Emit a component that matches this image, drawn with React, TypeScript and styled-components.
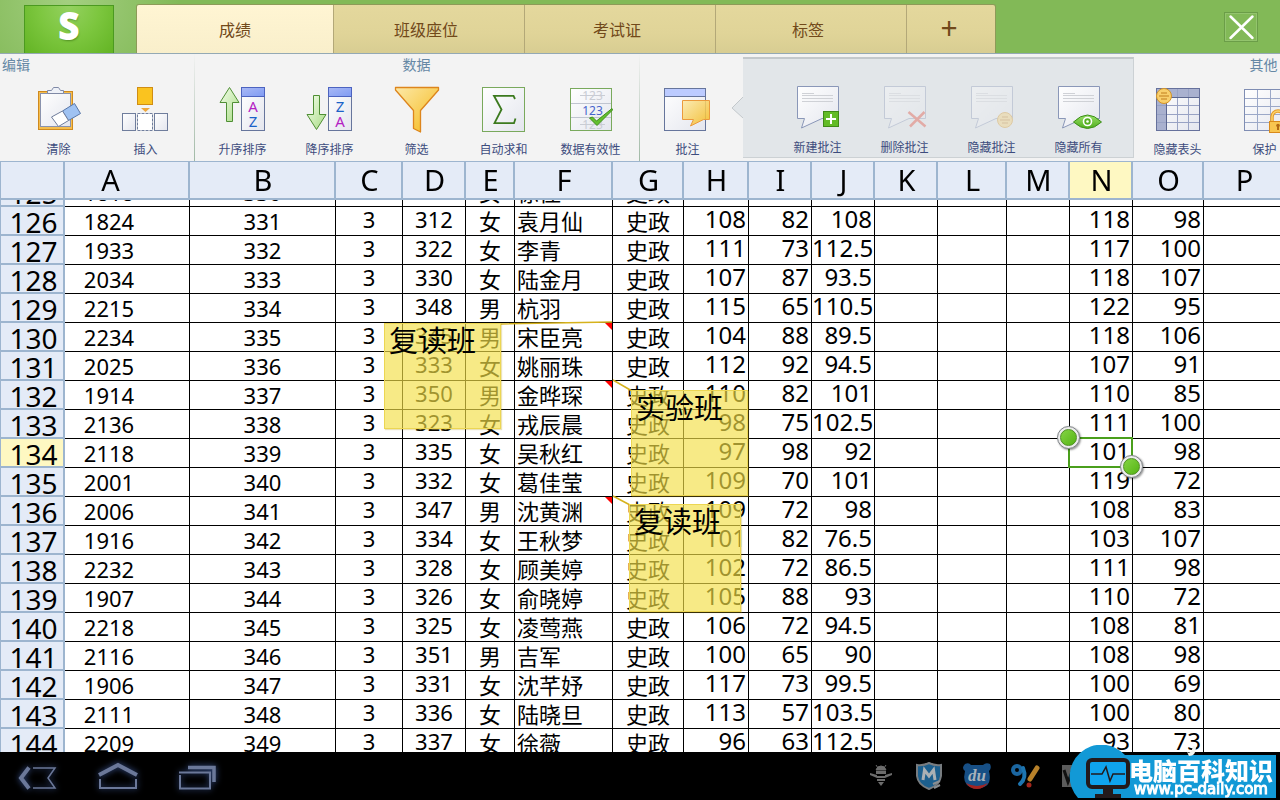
import React, { useLayoutEffect, useRef } from "react";
import styled, { createGlobalStyle, css } from "styled-components";

const SANS = `"Noto Sans", "Noto Sans CJK SC", sans-serif`;

const GlobalStyle = createGlobalStyle`
  *, *::before, *::after { box-sizing: border-box; }
  html, body, #root { height: 100%; }
  body { margin: 0; overflow: hidden; background: #000; font-family: ${SANS}; }
  button { font-family: inherit; padding: 0; border: 0; background: none; cursor: pointer; }
`;

/* ---------- shell ---------- */

const Screen = styled.div`
  display: flex;
  flex-direction: column;
  height: 100vh;
  overflow: hidden;
  background: #fff;
`;

const TopBar = styled.header`
  display: flex;
  align-items: flex-end;
  flex: none;
  height: 54px;
  padding: 0 22px 0 24px;
  border-bottom: 1px solid #94a9b4;
  background: radial-gradient(circle at 69px 0, #a3cf80 0, #82b957 110px);
`;

const Logo = styled.button`
  width: 90px;
  height: 48px;
  margin-right: 22px;
  border: 1px solid #4b9a20;
  border-bottom: 0;
  background: radial-gradient(ellipse at 50% 0, #94d160 0, #7cc63e 50%, #63b424 100%);
  color: #fff;
  font-size: 36px;
  font-weight: 700;
  line-height: 40px;
  padding-bottom: 8px;
  -webkit-text-stroke: 2px #fff;
  text-shadow: 1px 2px 2px rgba(40, 90, 10, 0.5);
`;

const Tabs = styled.nav`
  display: flex;
  height: 49px;
  border: 1px solid #8d9a58;
  border-bottom: 0;
  border-radius: 3px 3px 0 0;
  overflow: hidden;
`;

const Tab = styled.button<{ $active?: boolean; $narrow?: boolean }>`
  width: ${(p) => (p.$narrow ? 88 : p.$active ? 197 : 191)}px;
  border-right: 1px solid #b3a878;
  background: ${(p) =>
    p.$active
      ? "linear-gradient(#fff5d3, #f9efcb)"
      : "linear-gradient(#e4d89d, #e0d498 60%, #d8cd92)"};
  color: #71491a;
  font-size: ${(p) => (p.$narrow ? 30 : 16)}px;
  line-height: 24px;
  padding: ${(p) => (p.$narrow ? "0 4px 2px 0" : p.$active ? "2px 0 0" : "2px 6px 0 0")};
  &:last-child { border-right: 0; }
`;

const CloseButton = styled.button`
  width: 34px;
  height: 30px;
  margin: 0 0 11px auto;
  border: 1px solid #6b9d48;
  box-shadow: inset 0 0 0 1px #93c46d;
`;

/* ---------- ribbon ---------- */

const Ribbon = styled.div`
  display: flex;
  flex: none;
  height: 107px;
  overflow: hidden;
  background: #f3f3f3;
`;

const Group = styled.section<{ $pad: string; $divided?: boolean; $width?: number }>`
  position: relative;
  display: flex;
  flex-direction: column;
  flex: none;
  padding: ${(p) => p.$pad};
  ${(p) => p.$width && css`width: ${p.$width}px;`}
  ${(p) =>
    p.$divided &&
    css`
      border-right: 1px solid;
      border-image: linear-gradient(#f3f3f3, #9fb8a4) 1;
    `}
`;

const GroupTitle = styled.h2<{ $left?: boolean }>`
  height: 24px;
  margin: 0 ${(p) => (p.$left ? "0 0 -13px" : "0")};
  color: #6688a5;
  font-size: 14px;
  font-weight: 400;
  line-height: 22px;
  text-align: ${(p) => (p.$left ? "left" : "center")};
`;

const Tools = styled.div`
  display: flex;
  padding-top: 8px;
`;

const ToolButton = styled.button`
  display: flex;
  flex-direction: column;
  align-items: center;
  width: 87px;
  color: #3d4c7d;
  font-size: 12px;
  line-height: 20px;
  white-space: nowrap;
  svg { display: block; margin-bottom: 6px; }
`;

const CommentPanel = styled.section`
  position: relative;
  display: flex;
  flex: none;
  align-items: flex-start;
  height: 101px;
  margin-top: 3px;
  padding: 25px 11px 0 31px;
  border: 1px solid #ccd1d4;
  border-top: 2px solid #c3c8cb;
  border-left-width: 0;
  background: #e2e6e9;
`;

const Pointer = styled.svg`
  position: absolute;
  right: 100%;
  top: 38px;
`;

/* ---------- sheet ---------- */

const SheetView = styled.main`
  flex: 1;
  min-height: 0;
  overflow: hidden;
  background: #fff;
`;

const SheetCanvas = styled.div`
  position: relative;
  width: 100%;
  min-width: 1285px;
`;

const SheetTable = styled.table`
  width: 100%;
  table-layout: fixed;
  border-collapse: separate;
  border-spacing: 0;
  color: #000;
`;

const HeadCell = styled.th<{ $on?: boolean; $kind?: Kind }>`
  position: sticky;
  top: 0;
  z-index: 3;
  height: 39px;
  padding: 0 ${(p) => (p.$kind === "code" ? 34 : 0)}px 0 2px;
  border: solid #9db5cf;
  border-width: 1px 2px 2px 0;
  background: ${(p) => (p.$on ? "#fef8c2" : "#e4ebf7")};
  font-size: 29px;
  font-weight: 400;
  line-height: 36px;
  text-align: center;
  &:first-child { border-left-width: 1px; }
`;

const RowHead = styled.th<{ $on?: boolean }>`
  height: 29px;
  padding: 0;
  border: solid #9db5cf;
  border-width: 0 2px 2px 1px;
  background: ${(p) => (p.$on ? "#fef8c2" : "#e4ebf7")};
  font-size: 28px;
  font-weight: 400;
  text-align: center;
  padding-left: 3px;
  div { height: 27px; line-height: 30px; }
`;

type Kind = "code" | "id" | "mid" | "text" | "name" | "num";

const kinds: Record<Kind, ReturnType<typeof css>> = {
  code: css`font-size: 22px; line-height: 28px; text-align: center; padding-right: 36px;`,
  id: css`font-size: 22px; line-height: 28px; text-align: center;`,
  mid: css`font-size: 22px; line-height: 25px; text-align: center;`,
  text: css`font-size: 22px; line-height: 28px; text-align: center;`,
  name: css`font-size: 22px; line-height: 28px; text-align: left; padding-left: 2px;`,
  num: css`font-size: 24px; line-height: 24px; text-align: right; padding-right: 2px;`,
};

const Cell = styled.td<{ $kind: Kind; $flag?: boolean }>`
  position: relative;
  height: 29px;
  padding: 0;
  border: solid #000;
  border-width: 0 1px 1px 0;
  vertical-align: top;
  white-space: nowrap;
  ${(p) => kinds[p.$kind]}
  div { height: 28px; }
  ${(p) =>
    p.$flag &&
    css`
      &::after {
        content: "";
        position: absolute;
        top: 0;
        right: 0;
        border-top: 7px solid #f00;
        border-left: 7px solid transparent;
      }
    `}
`;

const Note = styled.aside<{ $x: number; $y: number; $w: number; $h: number }>`
  position: absolute;
  z-index: 1;
  left: ${(p) => p.$x}px;
  top: ${(p) => p.$y}px;
  width: ${(p) => p.$w}px;
  height: ${(p) => p.$h}px;
  padding-left: 4px;
  border: 1px solid #ecd653;
  background: rgba(243, 223, 72, 0.66);
  box-shadow: 1px 1px 1px rgba(190, 160, 20, 0.3);
  font-size: 29px;
  line-height: 34px;
  white-space: nowrap;
`;

const Leaders = styled.svg`
  position: absolute;
  z-index: 1;
  left: 0;
  top: 0;
  pointer-events: none;
`;

const Selection = styled.div`
  position: absolute;
  z-index: 1;
  left: 1068px;
  top: 298px;
  width: 65px;
  height: 31px;
  border: 2px solid #4a9f1c;
`;

const Handle = styled.button<{ $end?: boolean }>`
  position: absolute;
  display: flex;
  align-items: center;
  justify-content: center;
  left: ${(p) => (p.$end ? 50 : -13)}px;
  top: ${(p) => (p.$end ? 16 : -13)}px;
  width: 23px;
  height: 23px;
  border: 1px solid #7f8488;
  border-radius: 50%;
  background: #ececec;
  box-shadow: 1px 1px 2px rgba(0, 0, 0, 0.4);
  &::after {
    content: "";
    width: 17px;
    height: 17px;
    border: 1px solid #4f8f24;
    border-radius: 50%;
    background: linear-gradient(135deg, #84d444, #55b414);
  }
`;

/* ---------- system bar ---------- */

const SystemBar = styled.footer`
  display: flex;
  align-items: center;
  flex: none;
  height: 48px;
  padding: 0 191px 0 13px;
  background: #000;
`;

const NavButton = styled.button`
  width: 48px;
  height: 44px;
  margin-right: 32px;
  svg { display: block; filter: drop-shadow(0 0 3px #3a5490); }
`;

const Tray = styled.div`
  display: flex;
  gap: 16px;
  margin-left: auto;
`;

const Watermark = styled.a`
  position: absolute;
  z-index: 5;
  right: 2px;
  bottom: 2px;
  width: 210px;
  height: 53px;
  color: #fff;
  text-decoration: none;
`;

const WatermarkArt = styled.svg`
  position: absolute;
  left: 0;
  top: 0;
`;

const WatermarkText = styled.div`
  position: relative;
  display: flex;
  flex-direction: column;
  align-items: center;
  padding: 13px 4px 0 60px;
  text-align: center;
  white-space: nowrap;
  strong { font: 900 24px/24px "Noto Sans CJK SC", sans-serif; }
  span { font: 400 15px/14px "DejaVu Sans", sans-serif; -webkit-text-stroke: 1px #fff; }
`;

/* ---------- icons ---------- */

const Svg = ({ children, dim }: { children: React.ReactNode; dim?: boolean }) => (
  <svg width="48" height="48" viewBox="0 0 48 48" fill="none" opacity={dim ? 0.35 : 1} aria-hidden="true">
    {children}
  </svg>
);

const DefsSvg = styled.svg`
  position: absolute;
`;

const Defs = () => (
  <DefsSvg width="0" height="0" aria-hidden="true">
    <defs>
      <linearGradient id="paper" x1="0" y1="0" x2="1" y2="1">
        <stop offset="0" stopColor="#fff" />
        <stop offset="1" stopColor="#e4e6ee" />
      </linearGradient>
      <linearGradient id="gold" x1="0" y1="0" x2="1" y2="1">
        <stop offset="0" stopColor="#fce9a8" />
        <stop offset="1" stopColor="#f5b817" />
      </linearGradient>
      <linearGradient id="leaf" x1="0" y1="0" x2="1" y2="1">
        <stop offset="0" stopColor="#f4fdec" />
        <stop offset="1" stopColor="#a8dc84" />
      </linearGradient>
      <linearGradient id="sky" x1="0" y1="0" x2="1" y2="1">
        <stop offset="0" stopColor="#a9b9f5" />
        <stop offset="1" stopColor="#7f9bf3" />
      </linearGradient>
      <linearGradient id="green" x1="0" y1="0" x2="0" y2="1">
        <stop offset="0" stopColor="#9ae06a" />
        <stop offset="1" stopColor="#4fae1c" />
      </linearGradient>
    </defs>
  </DefsSvg>
);

const ClearIcon = () => (
  <Svg>
    <rect x="3.5" y="5.5" width="34" height="38" fill="#f5bd4d" stroke="#cf8a1e" />
    <rect x="5.5" y="7.5" width="30" height="33" fill="url(#paper)" stroke="#8a93ae" />
    <path d="M12.500 7.500V4.500H16.500L18.500 1.500H23.500L25.500 4.500H28.500V7.500Z" fill="#eef1f8" stroke="#7f89a6" />
    <path d="M27.500 25L39.500 17.500L45.500 27.500L33.500 34.500Z" fill="#9fc2f2" stroke="#5876a8" />
    <path d="M16.500 31L27.500 25L33.500 34.500L23.500 40.500Z" fill="#fff" stroke="#6f7d9c" />
  </Svg>
);

const InsertIcon = () => (
  <Svg>
    <rect x="15.500" y="1.500" width="15" height="17" fill="#fac31f" stroke="#d08d13" />
    <path d="M19 22H28L23.500 26Z" fill="#eda63c" />
    <rect x=".5" y="27.500" width="13" height="17" fill="url(#paper)" stroke="#6f7d9c" />
    <rect x="15.500" y="27.500" width="15" height="17" fill="#fff" stroke="#6f7d9c" strokeDasharray="3 1" />
    <rect x="32.500" y="27.500" width="13" height="17" fill="url(#paper)" stroke="#6f7d9c" />
  </Svg>
);

const SortIcon = ({ desc }: { desc?: boolean }) => (
  <Svg>
    {desc ? (
      <path d="M7.500 9.500H13.500V28.500H20L10.500 43.500L1 28.500H7.500Z" fill="url(#leaf)" stroke="#4f8f34" />
    ) : (
      <path d="M7.500 35.500H13.500V16.500H20L10.500 1.500L1 16.500H7.500Z" fill="url(#leaf)" stroke="#4f8f34" />
    )}
    <rect x="22.500" y="1.500" width="23" height="43" fill="url(#paper)" stroke="#66759c" />
    <rect x="22.500" y="1.500" width="23" height="9" fill="url(#sky)" stroke="#4c63c0" />
    <text x="34" y="26" fontSize="15" textAnchor="middle" fill={desc ? "#1a62c8" : "#b41fc4"}>{desc ? "Z" : "A"}</text>
    <text x="34" y="41" fontSize="15" textAnchor="middle" fill={desc ? "#b41fc4" : "#1a62c8"}>{desc ? "A" : "Z"}</text>
  </Svg>
);

const FilterIcon = () => (
  <Svg>
    <path d="M2.500 1.500H45.500V4L27.500 24.500V46L20.500 42.500V24.500L2.500 4Z" fill="url(#gold)" stroke="#dd851c" strokeWidth="1.300" strokeLinejoin="round" />
  </Svg>
);

const SumIcon = () => (
  <Svg>
    <rect x="2.500" y="1.500" width="42" height="44" fill="url(#paper)" stroke="#79a95c" />
    <path d="M35 13L33.500 9.800H14L21.500 23.500L14.500 37.200H34L35.500 32.500" stroke="#3c7a1f" strokeWidth="1.800" />
  </Svg>
);

const ValidIcon = () => (
  <Svg>
    <rect x="3.500" y="2.500" width="41" height="42" fill="url(#paper)" stroke="#79a95c" />
    <path d="M4 17.500H44M4 31.500H44" stroke="#c0c5d0" />
    <text x="25.500" y="14" fontSize="12" textAnchor="middle" fill="#c9ccd4">123</text>
    <text x="25.500" y="29" fontSize="12" textAnchor="middle" fill="#4663cc">123</text>
    <text x="25.500" y="43" fontSize="12" textAnchor="middle" fill="#c9ccd4">123</text>
    <path d="M13 9.500H38M13 38.500H38" stroke="#c9ccd4" />
    <path d="M22.500 32L25.500 31L29.500 35L45 22.500L45.500 24L30 39.500Z" fill="#63c02e" stroke="#3f8f1c" />
  </Svg>
);

const CommentIcon = () => (
  <Svg>
    <rect x=".5" y="2.500" width="41" height="42" fill="url(#paper)" stroke="#66759c" />
    <rect x=".5" y="2.500" width="41" height="8" fill="#bccbff" stroke="#66759c" />
    <path d="M18.500 14.500H45.500V33.500H39.500L26.500 40L29.500 33.500H18.500Z" fill="url(#gold)" fillOpacity=".85" stroke="#eb9a3c" />
  </Svg>
);

const Bubble = () => (
  <>
    <path d="M3.500 2.500H44.500V34.500H28L7.500 44L10.500 34.500H3.500Z" fill="url(#paper)" stroke="#8a97b8" />
    <path d="M8 9.500H20M8 11.500H39M8 14.500H39M8 17.500H39" stroke="#cfd1d6" />
  </>
);

const Coin = ({ x, y }: { x: number; y: number }) => (
  <g transform={`translate(${x} ${y})`}>
    <circle r="7.500" fill="#f8cf6c" stroke="#d49425" />
    <path d="M-3 -3H3M-5 0H5M-3 3H3" stroke="#c17f1f" />
  </g>
);

const NewCommentIcon = () => (
  <Svg>
    <Bubble />
    <rect x="29.500" y="27.500" width="15" height="15" fill="#62bb26" stroke="#3f8a17" />
    <path d="M37 30V40M32 35H42" stroke="#fff" strokeWidth="2" />
  </Svg>
);

const DeleteCommentIcon = () => (
  <Svg dim>
    <Bubble />
    <path d="M27.500 28L44.500 42.500M43.500 28L29 42.500" stroke="#e2402c" strokeWidth="2.500" />
  </Svg>
);

const HideCommentIcon = () => (
  <Svg dim>
    <Bubble />
    <Coin x={37} y={36} />
  </Svg>
);

const HideAllIcon = () => (
  <Svg>
    <Bubble />
    <path d="M18.500 38Q32.500 24 46.500 38Q32.500 51 18.500 38Z" fill="url(#green)" stroke="#3f8f1c" />
    <circle cx="32.500" cy="37.500" r="4" fill="#55b021" stroke="#fff" strokeWidth="1.600" />
    <circle cx="32.500" cy="37.500" r="1.300" fill="#fff" />
  </Svg>
);

const HideHeaderIcon = () => (
  <Svg>
    <rect x="2.500" y="2.500" width="43" height="42" fill="url(#paper)" />
    <path d="M3 3H45V11.500H12.500V44H3Z" fill="#a9b1cf" />
    <path d="M23.500 3V44M34.500 3V44M3 19.500H45M3 28.500H45M3 36.500H45" stroke="#98a2c4" />
    <path d="M12.500 44V11.500H45" stroke="#5b668f" />
    <rect x="2.500" y="2.500" width="43" height="42" stroke="#66719c" />
    <Coin x={10} y={10} />
  </Svg>
);

const ProtectIcon = () => (
  <Svg>
    <rect x="3.500" y="3.500" width="44" height="41" fill="url(#paper)" stroke="#7f8db3" />
    <path d="M16.500 4V44M29.500 4V44M4 12.500H48M4 20.500H48M4 28.500H48M4 36.500H48" stroke="#9ba8c8" />
    <path d="M31 35V31A6 6 0 0 1 43 31V35" stroke="#e59a27" strokeWidth="3.500" />
    <path d="M31 35V31A6 6 0 0 1 43 31V35" stroke="#fbd36b" strokeWidth="1.500" />
    <rect x="28.500" y="35.500" width="19" height="11" fill="#f8c550" stroke="#d98a1b" />
    <circle cx="37" cy="39.500" r="1.800" fill="#b26a14" />
    <path d="M37 39V44" stroke="#b26a14" strokeWidth="2" />
  </Svg>
);

/* ---------- data ---------- */

interface Column { id: string; width?: number; kind: Kind }

const columns: Column[] = [
  { id: "A", width: 125, kind: "code" },
  { id: "B", width: 146, kind: "id" },
  { id: "C", width: 67, kind: "mid" },
  { id: "D", width: 63, kind: "mid" },
  { id: "E", width: 49, kind: "text" },
  { id: "F", width: 98, kind: "name" },
  { id: "G", width: 71, kind: "text" },
  { id: "H", width: 65, kind: "num" },
  { id: "I", width: 63, kind: "num" },
  { id: "J", width: 63, kind: "num" },
  { id: "K", width: 63, kind: "num" },
  { id: "L", width: 69, kind: "num" },
  { id: "M", width: 63, kind: "num" },
  { id: "N", width: 63, kind: "num" },
  { id: "O", width: 71, kind: "num" },
  { id: "P", kind: "num" },
];

const source = `
125 1818 330 3 311 女 徐佳 史政 109 80 99 118 95
126 1824 331 3 312 女 袁月仙 史政 108 82 108 118 98
127 1933 332 3 322 女 李青 史政 111 73 112.5 117 100
128 2034 333 3 330 女 陆金月 史政 107 87 93.5 118 107
129 2215 334 3 348 男 杭羽 史政 115 65 110.5 122 95
130 2234 335 3 345 男 宋臣亮 史政 104 88 89.5 118 106
131 2025 336 3 333 女 姚丽珠 史政 112 92 94.5 107 91
132 1914 337 3 350 男 金晔琛 史政 110 82 101 110 85
133 2136 338 3 323 女 戎辰晨 史政 98 75 102.5 111 100
134 2118 339 3 335 女 吴秋红 史政 97 98 92 101 98
135 2001 340 3 332 女 葛佳莹 史政 109 70 101 119 72
136 2006 341 3 347 男 沈黄渊 史政 109 72 98 108 83
137 1916 342 3 334 女 王秋梦 史政 101 82 76.5 103 107
138 2232 343 3 328 女 顾美婷 史政 102 72 86.5 111 98
139 1907 344 3 326 女 俞晓婷 史政 105 88 93 110 72
140 2218 345 3 325 女 凌莺燕 史政 106 72 94.5 108 81
141 2116 346 3 351 男 吉军 史政 100 65 90 108 98
142 1906 347 3 331 女 沈芊妤 史政 117 73 99.5 100 69
143 2111 348 3 336 女 陆晓旦 史政 113 57 103.5 100 80
144 2209 349 3 337 女 徐薇 史政 96 63 112.5 93 73`;

const rows = source.trim().split("\n").map((line) => {
  const [no, ...v] = line.split(" ");
  return { no, values: [...v.slice(0, 10), "", "", "", ...v.slice(10), ""] };
});

const flagged = new Set(["130", "132", "136"]);

/* the sheet is scrolled part of the way into its first loaded row */
const SCROLL_TOP = 22;

function Tool({ icon, label, disabled }: { icon: React.ReactNode; label: string; disabled?: boolean }) {
  return (
    <ToolButton type="button" aria-disabled={disabled}>
      {icon}
      {label}
    </ToolButton>
  );
}

function Sheet() {
  const view = useRef<HTMLElement>(null);
  useLayoutEffect(() => {
    if (view.current) view.current.scrollTop = SCROLL_TOP;
  }, []);
  return (
    <SheetView ref={view}>
      <SheetCanvas>
        <SheetTable>
          <colgroup>
            <col width={65} />
            {columns.map((c) => <col key={c.id} width={c.width} />)}
          </colgroup>
          <thead>
            <tr>
              <HeadCell />
              {columns.map((c) => (
                <HeadCell key={c.id} scope="col" $on={c.id === "N"} $kind={c.kind}>{c.id}</HeadCell>
              ))}
            </tr>
          </thead>
          <tbody>
            {rows.map((r) => (
              <tr key={r.no}>
                <RowHead scope="row" $on={r.no === "134"}><div>{r.no}</div></RowHead>
                {columns.map((c, i) => (
                  <Cell key={c.id} $kind={c.kind} $flag={c.id === "F" && flagged.has(r.no)}>
                    <div>{r.values[i]}</div>
                  </Cell>
                ))}
              </tr>
            ))}
          </tbody>
        </SheetTable>
        <Leaders width="1285" height="600" stroke="#d6b21c" strokeWidth="1.500">
          <path d="M612 183L501 185M613 241L632 252M613 357L630 366" />
        </Leaders>
        <Note $x={384} $y={184} $w={117} $h={106}>复读班</Note>
        <Note $x={631} $y={251} $w={117} $h={106}>实验班</Note>
        <Note $x={629} $y={365} $w={112} $h={108}>复读班</Note>
        <Selection>
          <Handle type="button" aria-label="选区起点" />
          <Handle type="button" aria-label="选区终点" $end />
        </Selection>
      </SheetCanvas>
    </SheetView>
  );
}

export default function App() {
  return (
    <Screen>
      <GlobalStyle />
      <Defs />
      <TopBar>
        <Logo type="button">S</Logo>
        <Tabs>
          <Tab type="button" $active>成绩</Tab>
          <Tab type="button">班级座位</Tab>
          <Tab type="button">考试证</Tab>
          <Tab type="button">标签</Tab>
          <Tab type="button" $narrow>+</Tab>
        </Tabs>
        <CloseButton type="button" aria-label="关闭">
          <svg width="32" height="28" viewBox="0 0 32 28" stroke="#fff" strokeWidth="2.500" strokeLinecap="round">
            <path d="M5.500 3.500L27.500 25M27.500 3.500L5.500 25" />
          </svg>
        </CloseButton>
      </TopBar>

      <Ribbon>
        <Group $pad="0 5px 0 15px" $divided>
          <GroupTitle $left>编辑</GroupTitle>
          <Tools>
            <Tool icon={<ClearIcon />} label="清除" />
            <Tool icon={<InsertIcon />} label="插入" />
          </Tools>
        </Group>
        <Group $pad="0 5px 0 4px" $divided>
          <GroupTitle>数据</GroupTitle>
          <Tools>
            <Tool icon={<SortIcon />} label="升序排序" />
            <Tool icon={<SortIcon desc />} label="降序排序" />
            <Tool icon={<FilterIcon />} label="筛选" />
            <Tool icon={<SumIcon />} label="自动求和" />
            <Tool icon={<ValidIcon />} label="数据有效性" />
          </Tools>
        </Group>
        <Group $pad="24px 12px 0 4px">
          <Tools>
            <Tool icon={<CommentIcon />} label="批注" />
          </Tools>
        </Group>
        <CommentPanel>
          <Pointer width="12" height="22" viewBox="0 0 12 22">
            <path d="M12 0L1 11L12 21Z" fill="#e2e6e9" />
            <path d="M12 0L1 11L12 21" fill="none" stroke="#c3c8cb" />
          </Pointer>
          <Tool icon={<NewCommentIcon />} label="新建批注" />
          <Tool icon={<DeleteCommentIcon />} label="删除批注" disabled />
          <Tool icon={<HideCommentIcon />} label="隐藏批注" disabled />
          <Tool icon={<HideAllIcon />} label="隐藏所有" />
        </CommentPanel>
        <Group $pad="0" $width={259}>
          <GroupTitle>其他</GroupTitle>
          <Tools>
            <Tool icon={<HideHeaderIcon />} label="隐藏表头" />
            <Tool icon={<ProtectIcon />} label="保护" />
          </Tools>
        </Group>
      </Ribbon>

      <Sheet />

      <SystemBar>
        <NavButton type="button" aria-label="返回">
          <svg width="48" height="44" viewBox="0 0 48 44" fill="none" stroke="#6b7899">
            <path d="M16 13.500L8 24L16 34.500" strokeWidth="4" />
            <path d="M20 14H42L35 24L42 34H20" strokeWidth="1.500" />
          </svg>
        </NavButton>
        <NavButton type="button" aria-label="主屏幕">
          <svg width="48" height="44" viewBox="0 0 48 44" fill="none" stroke="#6b7899">
            <path d="M6 21L25 11L44 21" strokeWidth="4" />
            <path d="M7 25V34H43V25" strokeWidth="2" />
          </svg>
        </NavButton>
        <NavButton type="button" aria-label="最近任务">
          <svg width="48" height="44" viewBox="0 0 48 44" fill="none" stroke="#6b7899">
            <path d="M15 13.500H41V28" strokeWidth="3.500" />
            <path d="M6 18.500H37V34.500H7V21" strokeWidth="2" />
          </svg>
        </NavButton>
        <Tray>
          <svg width="32" height="32" viewBox="0 0 32 32" fill="#6c6c6c">
            <path d="M11 10Q12 6 16 6Q20 6 21 10ZM11 5L13 8M21 5L19 8" stroke="#6c6c6c" />
            <rect x="11" y="11" width="10" height="3" />
            <path d="M5 13L12 15V18L5 15ZM27 13L20 15V18L27 15Z" />
            <path d="M12 16H20V18H12ZM12 19H20V21H12ZM13 22H19L16 26Z" />
          </svg>
          <svg width="32" height="32" viewBox="0 0 32 32">
            <path d="M16 3Q22 6 28 5V16Q27 25 16 29Q5 25 4 16V5Q10 6 16 3Z" fill="#1c5f8e" stroke="#777c80" strokeWidth="2" />
            <path d="M10 20L11.500 10L16 16L20.500 10L22 20" fill="none" stroke="#aab0b4" strokeWidth="3" />
            <path d="M20 24L27 21M21 28L27 25" stroke="#8a8e92" strokeWidth="2" />
          </svg>
          <svg width="32" height="32" viewBox="0 0 32 32">
            <path d="M4 4Q8 2 10 5H22Q25 2 29 4Q31 8 28 11Q31 24 23 27Q16 30 9 27Q1 23 4 11Q0 8 4 4Z" fill="#174f85" />
            <path d="M5 23Q16 29 27 23Q22 29 16 29Q9 29 5 23Z" fill="#a32420" />
            <text x="16" y="21" fontSize="17" fontWeight="700" fontStyle="italic" textAnchor="middle" fill="#a8b2ba" fontFamily="Liberation Serif, serif">du</text>
          </svg>
          <svg width="32" height="32" viewBox="0 0 32 32" fill="none" strokeLinecap="round">
            <circle cx="8" cy="10" r="4" stroke="#1b66a0" strokeWidth="4" />
            <path d="M14 8Q18 18 11 24" stroke="#1d75b0" strokeWidth="4" />
            <path d="M28 8L21 19" stroke="#b7812a" strokeWidth="5" />
            <circle cx="20" cy="25" r="2.500" fill="#a3261c" />
          </svg>
          <svg width="32" height="32" viewBox="0 0 32 32">
            <rect x="5" y="5" width="22" height="22" fill="#5c5c5c" />
            <path d="M7 10L11 22L15 12L19 22L23 10" fill="none" stroke="#111" strokeWidth="3" />
          </svg>
        </Tray>
      </SystemBar>

      <Watermark href="#">
        <WatermarkArt width="210" height="53" viewBox="0 0 210 53">
          <path d="M10 53A31.500 31.500 0 1 1 57 10H208V53Z" fill="#1299d6" />
          <rect x="20" y="15" width="40" height="27" rx="4" fill="#0fa3ee" stroke="#231a1c" strokeWidth="4" />
          <path d="M23 29H34L38 22L42 36L45 29H57" fill="none" stroke="#231a1c" strokeWidth="1.500" />
          <path d="M35 43H45V49H53V53H27V49H35Z" fill="#231a1c" />
          <path d="M119 7Q123 10 125 1L128 2Q128 11 121 11Z" fill="#f4f4ee" />
        </WatermarkArt>
        <WatermarkText>
          <strong>电脑百科知识</strong>
          <span>www.pc-daily.com</span>
        </WatermarkText>
      </Watermark>
    </Screen>
  );
}
